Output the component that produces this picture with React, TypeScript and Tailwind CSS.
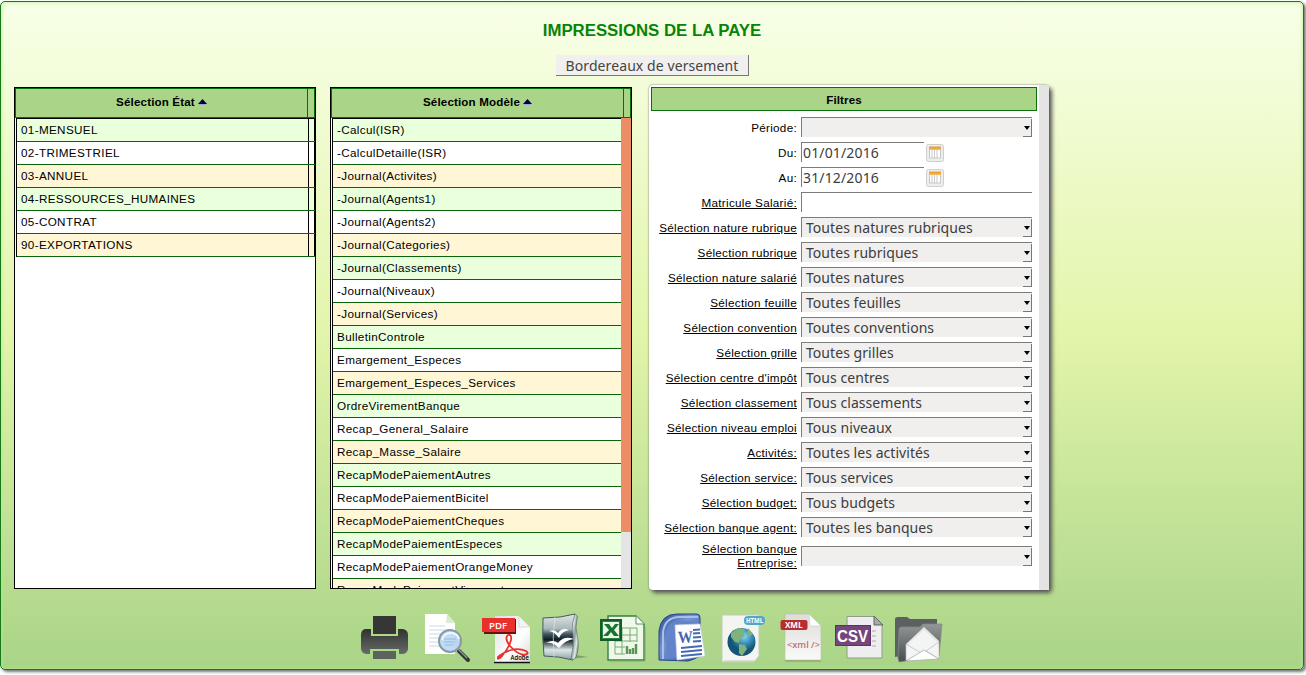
import type { ReactNode } from "react";

const ETATS = ["01-MENSUEL", "02-TRIMESTRIEL", "03-ANNUEL", "04-RESSOURCES_HUMAINES", "05-CONTRAT", "90-EXPORTATIONS"];

const MODELES = [
  "-Calcul(ISR)",
  "-CalculDetaille(ISR)",
  "-Journal(Activites)",
  "-Journal(Agents1)",
  "-Journal(Agents2)",
  "-Journal(Categories)",
  "-Journal(Classements)",
  "-Journal(Niveaux)",
  "-Journal(Services)",
  "BulletinControle",
  "Emargement_Especes",
  "Emargement_Especes_Services",
  "OrdreVirementBanque",
  "Recap_General_Salaire",
  "Recap_Masse_Salaire",
  "RecapModePaiementAutres",
  "RecapModePaiementBicitel",
  "RecapModePaiementCheques",
  "RecapModePaiementEspeces",
  "RecapModePaiementOrangeMoney",
  "RecapModePaiementVirement",
];

const FILTRES = [
  ["Sélection nature rubrique", "Toutes natures rubriques"],
  ["Sélection rubrique", "Toutes rubriques"],
  ["Sélection nature salarié", "Toutes natures"],
  ["Sélection feuille", "Toutes feuilles"],
  ["Sélection convention", "Toutes conventions"],
  ["Sélection grille", "Toutes grilles"],
  ["Sélection centre d'impôt", "Tous centres"],
  ["Sélection classement", "Tous classements"],
  ["Sélection niveau emploi", "Tous niveaux"],
  ["Activités:", "Toutes les activités"],
  ["Sélection service:", "Tous services"],
  ["Sélection budget:", "Tous budgets"],
  ["Sélection banque agent:", "Toutes les banques"],
];

const ROW_COLORS = ["bg-[#eaffdc]", "bg-white", "bg-[#fff6d5]"];

function SortArrow() {
  return (
    <svg className="ml-[3px] h-[6px] w-[9px]" viewBox="0 0 9 6">
      <path d="M0 5 4.5 0 9 5Z" fill="#00003c" />
      <path d="M1 5.5h7" stroke="#9aa5dc" />
    </svg>
  );
}

function ListHeader({ title, split }: { title: string; split: string }) {
  return (
    <div className="flex h-[30px] shrink-0 border border-[#067006] bg-[#aad588]">
      <div className={`flex items-center justify-center pb-[2px] text-[11.6px] font-bold tracking-[0.15px] ${split}`}>
        {title}
        <SortArrow />
      </div>
      <div className="grow border-l border-[#067006]" />
    </div>
  );
}

function Row({ text, index, tail }: { text: string; index: number; tail?: boolean }) {
  return (
    <div className={`flex h-[23px] shrink-0 border-b border-[#0a650a] ${ROW_COLORS[index % 3]}`}>
      <div className="flex grow items-center whitespace-nowrap pl-[4px] text-[11.7px] tracking-[0.34px]">{text}</div>
      {tail && <div className="w-[7px] shrink-0 border-x border-black" />}
    </div>
  );
}

function FieldRow({ label, underline = true, children }: { label: string; underline?: boolean; children: ReactNode }) {
  return (
    <div className="flex h-[25px] items-start">
      <div className={`w-[146px] whitespace-nowrap pt-[3px] text-right text-[11.7px] leading-[16px] tracking-[0.29px] ${underline ? "underline underline-offset-[1px]" : ""}`}>
        {label}
      </div>
      <div className="ml-[4px] flex">{children}</div>
    </div>
  );
}

function Select({ value }: { value: string }) {
  return (
    <div className="flex h-[20px] w-[231px] items-center justify-between border-l border-t border-[#7c7c7c] bg-[#f0efee]">
      <span className="whitespace-nowrap pl-[4px] font-['Noto_Sans','Open_Sans',sans-serif] text-[14px] leading-[19px] tracking-[0.05px] text-[#3c3c3c]">{value}</span>
      <span className="flex h-[18px] w-[9px] items-center justify-center self-end border-b border-r border-[#777]">
        <svg className="h-[4px] w-[6px]" viewBox="0 0 6 4">
          <path d="M0 0h6L3 4Z" fill="#000" />
        </svg>
      </span>
    </div>
  );
}

function DateField({ value }: { value: string }) {
  return (
    <>
      <div className="flex h-[20px] w-[123px] items-center border-l border-t border-[#7c7c7c] bg-white pl-px font-['Noto_Sans','Open_Sans',sans-serif] text-[14px] leading-[19px] tracking-[0.15px] text-[#3c3c3c]">
        {value}
      </div>
      <svg className="ml-[2px] mt-[2px] h-[18px] w-[18px]" viewBox="0 0 18 18">
        <rect x="0.5" y="0.5" width="17" height="17" rx="2" fill="#eee" stroke="#cfcfcf" />
        <path d="M3 6h12v8H3z" fill="#fff" />
        <path d="M3.5 6v8M6 6v8M8.5 6v8M11 6v8M14.5 6v8M3 14h12" stroke="#c3c3c3" strokeWidth="0.9" />
        <path d="M3 2.5h12V6H3z" fill="#eba133" />
        <path d="M3 5.2h12" stroke="#f7c877" />
      </svg>
    </>
  );
}

function ToolIcon({ children }: { children: ReactNode }) {
  return (
    <svg className="h-[56px] w-[59px]" viewBox="0 0 59 56">
      {children}
    </svg>
  );
}

function Toolbar() {
  return (
    <div className="ml-[354px] mt-[19px] flex">
      <ToolIcon>
        <defs>
          <linearGradient id="print" x1="0" y1="0" x2="0" y2="1">
            <stop offset="0" stopColor="#323332" />
            <stop offset="1" stopColor="#666b67" />
          </linearGradient>
        </defs>
        <path d="M18 6h23v18H18z" fill="#363636" />
        <path d="M10 19h6v7h27v-7h5q5 1 5 6v14q-1 5-6 5h-3v-5H15v5h-4q-5-1-5-6V25q0-5 4-6Z" fill="url(#print)" />
        <path d="M18 41h23v8H18z" fill="#5c625d" />
      </ToolIcon>
      <ToolIcon>
        <path d="M11 4h22l8 9v31H11Z" fill="#fff" />
        <path d="m33 4-1 9h9Z" fill="#dcebd0" />
        <path d="M15 16h16M15 20h20M15 24h15M15 28h11M15 32h10M15 36h11" stroke="#ccd8e7" />
        <path d="m45 41 9 9" stroke="#333a36" strokeWidth="4" strokeLinecap="round" />
        <path d="m44 39 9 9" stroke="#929b98" strokeWidth="1.2" />
        <circle cx="36" cy="31" r="11" fill="#bcd8f3" fillOpacity="0.92" stroke="#8898a9" strokeWidth="2" />
        <path d="M28 30q2-8 10-7 6 1 7 6" fill="none" stroke="#edf7ff" strokeWidth="2" />
        <path d="M30 29h12M30 32h11M31 35h9" stroke="#93bade" />
      </ToolIcon>
      <ToolIcon>
        <defs>
          <linearGradient id="pdf" x1="0" y1="0" x2="1" y2="1">
            <stop offset="0" stopColor="#ddd" />
            <stop offset=".6" stopColor="#fff" />
            <stop offset="1" stopColor="#d8d8d8" />
          </linearGradient>
        </defs>
        <path d="M22 6h24l11 11v35H22Z" fill="url(#pdf)" />
        <path d="M46 6v11h11Z" fill="#f5f5f5" stroke="#c5c9c1" strokeWidth=".6" />
        <path d="M21 52.5h36" stroke="#111" strokeWidth="1.6" />
        <path d="M11 9h32v15H11z" fill="#671111" />
        <path d="M9 8h33v14H9z" fill="#e8312d" />
        <text x="16" y="18.5" fontSize="9.5" fill="#fff" fontWeight="600" fontFamily="Open Sans" textLength="18" lengthAdjust="spacingAndGlyphs">PDF</text>
        <path d="M35 25q-4 3 2 11 7 8 14 9 6-1 2-4-7-3-15-1-9 3-13 7-1 4 4-1 7-8 9-16 1-6-3-5Z" fill="none" stroke="#e8302c" strokeWidth="1.8" />
        <text x="37.5" y="49.5" fontSize="7" fill="#000" fontWeight="600" fontFamily="Open Sans" textLength="18.5" lengthAdjust="spacingAndGlyphs">Adobe</text>
      </ToolIcon>
      <ToolIcon>
        <defs>
          <linearGradient id="oo" x1="0" y1="0" x2="1" y2="1">
            <stop offset="0" stopColor="#acb8bb" />
            <stop offset=".25" stopColor="#eef2f0" />
            <stop offset=".48" stopColor="#8b9a9c" />
            <stop offset=".7" stopColor="#e2e9e8" />
            <stop offset="1" stopColor="#354750" />
          </linearGradient>
          <linearGradient id="oo2" x1="0" y1="0" x2="0" y2="1">
            <stop offset="0" stopColor="#e0e7e7" />
            <stop offset=".32" stopColor="#a9b8bb" />
            <stop offset=".44" stopColor="#405560" />
            <stop offset=".56" stopColor="#0d1b23" />
            <stop offset=".78" stopColor="#dce5e6" />
            <stop offset="1" stopColor="#8fa0a4" />
          </linearGradient>
        </defs>
        <path d="m38 49 18-2-18-3Z" fill="#668850" opacity=".65" />
        <path d="M11 8q18 0 32-4-3 10-1 20 3 14-1 26-15-4-29-4-2-20-1-38Z" fill="url(#oo2)" stroke="#465b60" />
        <path d="M43 4q4 2 2 5-2 9 0 15 3 14-1 23-2 4-5 2 3-12 2-25-2-10 2-20Z" fill="url(#oo)" stroke="#53656a" strokeWidth=".6" />
        <path d="M23 7q-3 20-1 40" stroke="#dde6e5" fill="none" opacity=".7" />
        <path d="M17 21q6-2 9 2 4-6 11-3-7 1-10 8-4-6-10-7Zm-3 12q7-4 12 0 6-8 16-4-9 1-15 9-6-6-13-5Z" fill="#fff" />
      </ToolIcon>
      <ToolIcon>
        <path d="M17 6h28l8 8v36H17Z" fill="#eff8e9" stroke="#338139" strokeWidth="1.4" />
        <path d="M45 6v8h8" fill="#fff" stroke="#53955a" />
        <path d="M54 17v34H18" fill="none" stroke="#7cab75" />
        <path d="M24 18h22v26H24zm0 7h22m-22 6h22m-22 6h22M31 18v26m8-26v26" fill="none" stroke="#76ad74" />
        <path d="M34 32h13v13H34z" fill="#eff8e9" />
        <path d="M36 44v-8m3 8v-5m3 5V38m3 6V34" stroke="#5a9653" strokeWidth="2.4" />
        <rect x="10" y="10" width="20" height="20" fill="#2a823e" stroke="#115c29" strokeWidth="2" />
        <path d="M12 12h16v16H12z" fill="#e9f5e7" />
        <path d="M13 14h5l3 4 3-4h4l-5 6 5 6h-5l-3-4-3 4h-5l6-6Z" fill="#187333" />
      </ToolIcon>
      <ToolIcon>
        <defs>
          <linearGradient id="word" x1="0" y1="0" x2="1" y2="1">
            <stop offset="0" stopColor="#294b94" />
            <stop offset=".4" stopColor="#7594d4" />
            <stop offset="1" stopColor="#3457a4" />
          </linearGradient>
        </defs>
        <path d="M9 50V21Q11 4 27 4h20q3 0 3 4v38q-7 4-12 5Z" fill="url(#word)" stroke="#244582" />
        <path d="M13 49V22Q15 8 28 7h20" fill="none" stroke="#a9bfe9" strokeWidth="2" />
        <path d="M16 49V23q2-12 13-12h19v31Z" fill="#6484c9" />
        <path d="m25 15 25-1 5 32-28 4Z" fill="#fff" stroke="#c8d3e9" strokeWidth=".7" />
        <text x="28" y="33" fontFamily="Liberation Serif" fontSize="17" fontWeight="bold" fill="#4468b0" transform="rotate(-2 28 33)" textLength="15" lengthAdjust="spacingAndGlyphs">W</text>
        <path d="m43 20 7-.5m-7 4 7-.5m-7 4.500 8-.5m-8 4.500 8-.5M31 38l21-2m-21 6 21-2m-21 6 21-2" stroke="#4669b4" strokeWidth="1.9" />
      </ToolIcon>
      <ToolIcon>
        <defs>
          <radialGradient id="globe" cx=".6" cy=".3">
            <stop offset="0" stopColor="#8dd8ef" />
            <stop offset=".5" stopColor="#3a92bb" />
            <stop offset="1" stopColor="#155477" />
          </radialGradient>
        </defs>
        <path d="M13 5h37v41l-5 6H13Z" fill="#f4f5f1" stroke="#c2cbbb" />
        <path d="M15 51h30" stroke="#becab2" />
        <circle cx="32.500" cy="32" r="14" fill="url(#globe)" />
        <path d="m22 23 7-5 7 1-2 4 2 3-5 3-1 4-4-1-4-5Zm8 11 6 1 2 4-5 7-3-3Zm9-16 5 6-4 3-1-4Z" fill="#7fb27c" />
        <rect x="35" y="6" width="21" height="9" rx="4" fill="#56a7c7" />
        <text x="37" y="13" fontSize="6.5" fontWeight="bold" fill="#fff" fontFamily="Open Sans" textLength="17" lengthAdjust="spacingAndGlyphs">HTML</text>
      </ToolIcon>
      <ToolIcon>
        <defs>
          <linearGradient id="xml" x1="0" y1="0" x2="0" y2="1">
            <stop offset="0" stopColor="#dddcd7" />
            <stop offset="1" stopColor="#fafafa" />
          </linearGradient>
        </defs>
        <path d="M17 4h24l12 12v34H17Z" fill="url(#xml)" stroke="#b7bfac" strokeWidth=".6" />
        <path d="M17 51h36" stroke="#829969" />
        <path d="m41 4 1 12h11Z" fill="#fff" stroke="#cbccc5" strokeWidth=".6" />
        <rect x="12.5" y="10" width="27" height="10" rx="2" fill="#b72d30" />
        <text x="17" y="18" fontSize="8" fontWeight="bold" fill="#fff" fontFamily="Open Sans" textLength="17.5" lengthAdjust="spacingAndGlyphs">XML</text>
        <text x="19" y="38" fontSize="9" fontWeight="600" fill="#c07070" fontFamily="Open Sans" textLength="33" lengthAdjust="spacingAndGlyphs">&lt;xml /&gt;</text>
      </ToolIcon>
      <ToolIcon>
        <path d="M20 6.5h27l8 8V48H20Z" fill="#eeedef" stroke="#909b88" />
        <path d="M47 6v9h9Z" fill="#aaa" stroke="#656565" />
        <path d="M45 21h4m-4 5h4m-4 5h4m-4 5h4" stroke="#c4c1c6" strokeWidth="1.5" />
        <rect x="8.5" y="15.5" width="35" height="20" fill="#75457d" stroke="#5b3264" />
        <text x="10" y="32" fontSize="17" fontWeight="bold" fill="#fff" fontFamily="Liberation Sans" textLength="31" lengthAdjust="spacingAndGlyphs">CSV</text>
      </ToolIcon>
      <ToolIcon>
        <defs>
          <linearGradient id="folder" x1="0" y1="0" x2="0" y2="1">
            <stop offset="0" stopColor="#949797" />
            <stop offset="1" stopColor="#484c4d" />
          </linearGradient>
        </defs>
        <path d="M9 47V9q0-2 3-2h9l3 2h27v31Z" fill="#5b6161" />
        <path d="m12 48 1-29q0-2 3-2h18l3-3h19l-3 32-40 6Z" fill="url(#folder)" stroke="#838987" strokeWidth=".7" />
        <path d="M20 34 38 17l15 14v17l-33 2Z" fill="#e4e6e5" />
        <path d="m23 33 15-13 13 12v6l-13 7-15-8Z" fill="#f3f4f4" />
        <path d="m20 34 15 9-15 8Zm33-2-13 9 13 8Z" fill="#f5f5f5" stroke="#b8bbba" strokeWidth=".7" />
        <path d="m20 51 18-11 15 9Z" fill="#fff" stroke="#aaaeac" strokeWidth=".8" />
      </ToolIcon>
    </div>
  );
}

export default function App() {
  return (
    <div className="h-[675px] w-[1306px] overflow-hidden bg-white pt-px font-['Liberation_Sans',Arial,sans-serif] text-black">
      <div className="h-[669px] w-[1304px] rounded-[5px] border border-[#187818] bg-[linear-gradient(to_bottom,#f8ffe8_0%,#e3f5ab_49%,#a9d487_100%)] shadow-[2px_2px_3px_#777,inset_0_0_4px_#a8f088]">
        <h1 className="pt-[19px] text-center text-[16.8px] font-bold leading-[20px] text-[#078307]">IMPRESSIONS DE LA PAYE</h1>
        <div className="mt-[14px] flex justify-center">
          <button className="h-[21px] w-[193px] border-b border-r border-[#777] bg-[#f1f0ef] pl-px pt-[2px] font-['Noto_Sans','Open_Sans',sans-serif] text-[14px] leading-[18px] tracking-[0.09px] text-[#444]">
            Bordereaux de versement
          </button>
        </div>

        <div className="ml-[13px] mt-[9px] flex h-[506px] items-start">
          <section className="mt-[2px] flex h-[502px] w-[302px] flex-col border border-black bg-white">
            <ListHeader title="Sélection État" split="w-[291px]" />
            <div className="ml-px border-l border-t border-black">
              {ETATS.map((t, i) => (
                <Row key={t} text={t} index={i} tail />
              ))}
            </div>
          </section>

          <section className="ml-[14px] mt-[2px] flex h-[502px] w-[302px] flex-col border border-black bg-white">
            <ListHeader title="Sélection Modèle" split="w-[291px]" />
            <div className="flex min-h-0 grow overflow-hidden">
              <div className="ml-px flex grow flex-col overflow-hidden border-l border-t border-black">
                {MODELES.map((t, i) => (
                  <Row key={t} text={t} index={i} />
                ))}
              </div>
              <div className="w-[10px] shrink-0 bg-[#e4e4e4]">
                <div className="h-[414px] bg-[#ec8d65]" />
              </div>
            </div>
          </section>

          <section className="ml-[17px] flex h-[505px] w-[400px] rounded-[4px] bg-white shadow-[3px_3px_4px_#555,0_0_2px_#777]">
            <div className="w-[390px] pl-[2px] pt-[2px]">
              <div className="flex h-[24px] w-[386px] items-center justify-center border border-[#087008] bg-[#aad588] pt-[2px] text-[11.6px] font-bold tracking-[0.1px]">Filtres</div>
              <div className="pt-[6px]">
                <FieldRow label="Période:" underline={false}>
                  <Select value="" />
                </FieldRow>
                <FieldRow label="Du:" underline={false}>
                  <DateField value="01/01/2016" />
                </FieldRow>
                <FieldRow label="Au:" underline={false}>
                  <DateField value="31/12/2016" />
                </FieldRow>
                <FieldRow label="Matricule Salarié:">
                  <div className="h-[20px] w-[231px] border-l border-t border-[#7c7c7c] bg-white" />
                </FieldRow>
                {FILTRES.map(([label, value]) => (
                  <FieldRow key={label} label={label}>
                    <Select value={value} />
                  </FieldRow>
                ))}
                <div className="flex h-[28px] items-center">
                  <div className="w-[146px] text-right text-[11.7px] leading-[14px] tracking-[0.29px] underline underline-offset-[1px]">
                    Sélection banque
                    <br />
                    Entreprise:
                  </div>
                  <div className="ml-[4px]">
                    <Select value="" />
                  </div>
                </div>
              </div>
            </div>
            <div className="grow bg-[#e4e4e4]" />
          </section>
        </div>

        <Toolbar />
      </div>
    </div>
  );
}
